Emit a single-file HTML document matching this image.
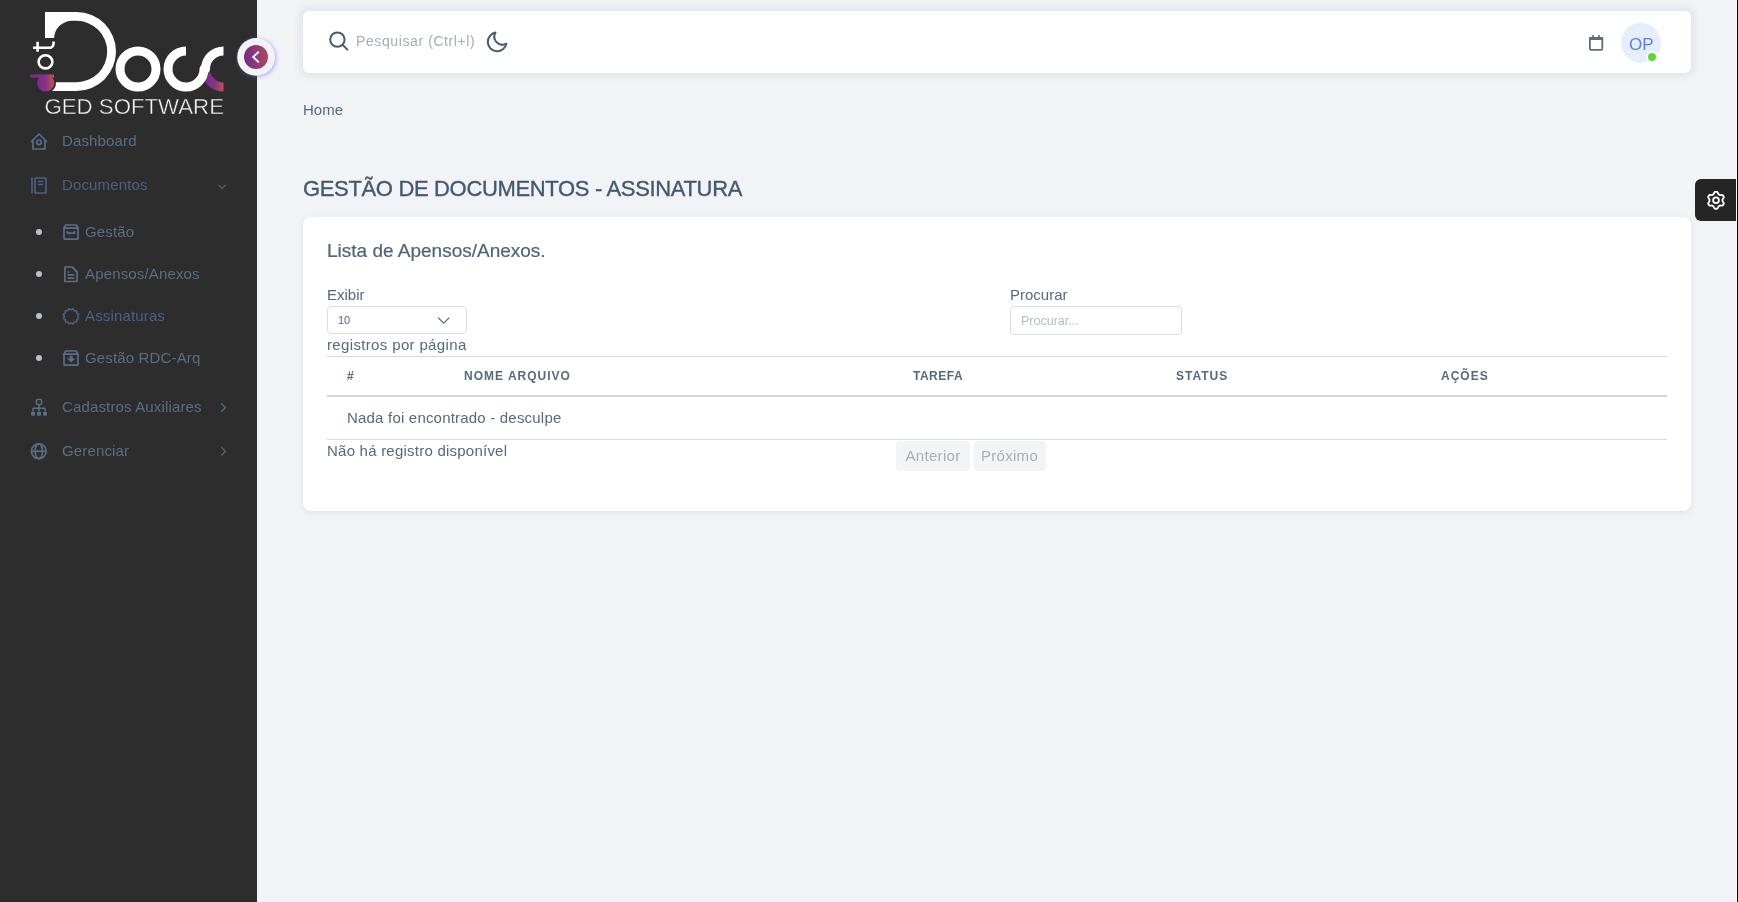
<!DOCTYPE html>
<html><head><meta charset="utf-8">
<style>
*{box-sizing:border-box;margin:0;padding:0}
html,body{width:1738px;height:902px;overflow:hidden}
body{background:#f2f3f7;font-family:"Liberation Sans",sans-serif;position:relative;color:#566a7f}
.a{position:absolute;white-space:nowrap;will-change:transform}
#sb{position:absolute;left:0;top:0;width:257px;height:902px;background:#2d2d2d}
.mi{position:absolute;font-size:15px;line-height:20px;color:#5f7189;letter-spacing:0.15px;will-change:transform}
.ic{position:absolute}
.mi{color:#5a6d86}.mi.dk{color:#4c6080}
.dot{position:absolute;width:6px;height:6px;border-radius:50%;background:#b9c2cc}
#nav{position:absolute;left:303px;top:11px;width:1388px;height:62px;background:#fff;border-radius:6px;box-shadow:0 0 6px 4px rgba(150,162,190,.16)}
#card{position:absolute;left:303px;top:217px;width:1388px;height:294px;background:#fff;border-radius:8px;box-shadow:0 2px 6px rgba(67,89,113,.10)}
.t15{font-size:15px;line-height:20px}
.th{top:369px;font-size:12px;line-height:14px;font-weight:bold;letter-spacing:1px;color:#566a7f}
.btn{top:441px;height:30px;background:#f3f4f6;border-radius:4px;font-size:15px;line-height:30px;color:#a5afba;text-align:center;letter-spacing:0.3px}

</style></head>
<body>
<div id="sb">
  <!-- logo -->
  <svg class="ic" style="left:0;top:0;will-change:transform" width="257" height="125" viewBox="0 0 257 125">
    <defs>
      <linearGradient id="g1" x1="0" x2="1" y1="0" y2="0">
        <stop offset="0" stop-color="#76288e"/><stop offset="0.55" stop-color="#8a3580"/><stop offset="1" stop-color="#c3525a"/>
      </linearGradient>
      <linearGradient id="g2" gradientUnits="userSpaceOnUse" x1="205" x2="224" y1="0" y2="0">
        <stop offset="0" stop-color="#76288e"/><stop offset="0.55" stop-color="#8a3580"/><stop offset="1" stop-color="#c3525a"/>
      </linearGradient>
    </defs>
    <!-- D -->
    <path fill="#fff" d="M45 12 H76.5 A39.5 39.5 0 0 1 76.5 91 H52.1 A10.3 10.3 0 0 0 55.9 82.2 H76.5 A30.7 30.7 0 0 0 76.5 20.8 H72 A18 18 0 0 0 54 38.8 V38 H45 Z"/>
    <!-- ot rotated -->
    <g fill="none" stroke="#fff" stroke-width="2.6">
      <ellipse cx="45.5" cy="61.85" rx="6.9" ry="6.55"/>
      <path d="M33.1 47.7 H49.6 A3.9 3.9 0 0 0 53.5 43.8 V41.6"/>
      <path d="M37.6 41.8 V51.7"/>
    </g>
    <!-- d gradient rotated -->
    <path fill="url(#g1)" d="M30 74.5 H54 V77.7 H30 Z"/>
    <circle cx="45.6" cy="83" r="8.6" fill="url(#g1)"/>
    <!-- o -->
    <circle cx="138" cy="69" r="18" fill="none" stroke="#fff" stroke-width="9"/>
    <!-- c2 bottom gradient -->
    <path d="M205.5 69 A18 18 0 0 0 223.5 87" fill="none" stroke="url(#g2)" stroke-width="9"/>
    <!-- c1 -->
    <path d="M186 51 A18 18 0 1 0 204 69 L205.5 69 A18 18 0 0 1 223.5 51" fill="none" stroke="#fff" stroke-width="9" stroke-linejoin="round"/>
    <!-- c2 top -->
    
    <text x="44.5" y="113.8" fill="#f4f4f4" stroke="#2d2d2d" stroke-width="0.4" font-family="Liberation Sans" font-size="21.3" textLength="179.5" lengthAdjust="spacingAndGlyphs">GED SOFTWARE</text>
  </svg>


  <svg class="ic" style="left:0;top:0" width="257" height="902" viewBox="0 0 257 902" fill="none" stroke="#5a6d86" stroke-width="1.7" stroke-linejoin="round" stroke-linecap="round">
    <!-- house -->
    <path d="M31.5 141.5 L39 134 L46.5 141.5"/>
    <path d="M33 140 V149 H45 V140"/>
    <circle cx="39" cy="142.3" r="2.3"/>
    <!-- book -->
    <path stroke="#4c6080" d="M32 177.5 V193.5" stroke-linecap="butt"/>
    <rect stroke="#4c6080" x="35" y="178" width="11" height="15" rx="0.5"/>
    <path stroke="#4c6080" d="M37.8 181.5 H43.2 M37.8 184.5 H43.2" stroke-linecap="butt"/>
    <!-- chevron down -->
    <path stroke="#4f5f73" d="M218.3 184.8 L222 188.5 L225.7 184.8" stroke-width="1.2"/>
    <!-- archive -->
    <path stroke="#5a6d86" d="M64 228.2 L65.6 225 H76.4 L78 228.2 V238.5 Q78 239.2 77.2 239.2 H64.8 Q64 239.2 64 238.5 Z"/>
    <path stroke="#5a6d86" d="M64 228.2 H78"/>
    <path stroke="#5a6d86" d="M67.5 231 V233.2 H74.5 V231" stroke-linecap="butt"/>
    <!-- file -->
    <path stroke="#5a6d86" d="M64.9 267 H72.3 L77 271.8 V281.5 H64.9 Z"/>
    <path stroke="#5a6d86" d="M72.3 267 L77 271.8"/>
    <rect x="67.6" y="271.3" width="1.6" height="1.6" fill="#5a6d86" stroke="none"/>
    <path stroke="#5a6d86" d="M67.6 274.8 H74.3 M67.6 278.2 H74.3" stroke-linecap="butt"/>
    <!-- badge -->
    <path stroke="#4c6080" stroke-width="1.6" d="M73.04 308.67 L74.30 310.58 L76.59 310.71 L76.72 313.00 L78.63 314.26 L77.60 316.30 L78.63 318.34 L76.72 319.60 L76.59 321.89 L74.30 322.02 L73.04 323.93 L71.00 322.90 L68.96 323.93 L67.70 322.02 L65.41 321.89 L65.28 319.60 L63.37 318.34 L64.40 316.30 L63.37 314.26 L65.28 313.00 L65.41 310.71 L67.70 310.58 L68.96 308.67 L71.00 309.70 Z"/>
    <!-- archive-in -->
    <path stroke="#5a6d86" d="M64 354.2 L65.6 351 H76.4 L78 354.2 V364.5 Q78 365.2 77.2 365.2 H64.8 Q64 365.2 64 364.5 Z"/>
    <path stroke="#5a6d86" d="M64 354.2 H78"/>
    <path d="M69.6 355.8 H72.6 V358.6 H75.4 L71.1 362.6 L66.8 358.6 H69.6 Z" fill="#5a6d86" stroke="none"/>
    <!-- sitemap -->
    <rect x="36.4" y="399.6" width="5.2" height="5" rx="1" stroke-width="1.5"/>
    <path d="M39 404.5 V408.3 M33 411.5 V408.3 H45 V411.5 M39 408.3 V411.5" stroke-width="1.5" stroke-linecap="butt"/>
    <rect x="31" y="411.8" width="4" height="4" rx="1" fill="#5a6d86" stroke="none"/>
    <rect x="37" y="411.8" width="4" height="4" rx="1" fill="#5a6d86" stroke="none"/>
    <rect x="43" y="411.8" width="4" height="4" rx="1" fill="#5a6d86" stroke="none"/>
    <!-- globe -->
    <circle cx="38.8" cy="451.3" r="7.4"/>
    <ellipse cx="38.8" cy="451.3" rx="3.7" ry="7.4"/>
    <path d="M31.4 451.3 H46.2" stroke-linecap="butt"/>
    <!-- chevrons right -->
    <path d="M221.6 403.6 L225.5 407.5 L221.6 411.4" stroke-width="1.2"/>
    <path d="M221.6 447.4 L225.5 451.3 L221.6 455.2" stroke-width="1.2"/>
  </svg>
  <div class="mi" style="left:62px;top:131px">Dashboard</div>
  <div class="mi dk" style="left:62px;top:175px">Documentos</div>
  <div class="mi" style="left:85.3px;top:222px">Gestão</div>
  <div class="mi" style="left:85.3px;top:264px">Apensos/Anexos</div>
  <div class="mi dk" style="left:85.3px;top:306px">Assinaturas</div>
  <div class="mi" style="left:85.3px;top:348px">Gestão RDC-Arq</div>
  <div class="mi" style="left:62px;top:397px">Cadastros Auxiliares</div>
  <div class="mi" style="left:62px;top:441px">Gerenciar</div>
  <div class="dot" style="left:36px;top:229px"></div>
  <div class="dot" style="left:36px;top:271px"></div>
  <div class="dot" style="left:36px;top:313px"></div>
  <div class="dot" style="left:36px;top:355px"></div>
</div>


<div id="nav"></div>
<svg class="ic" style="left:0;top:0;position:absolute;z-index:5" width="1738" height="902" viewBox="0 0 1738 902" fill="none" stroke-linecap="round" stroke-linejoin="round">
  <!-- collapse button -->
  <circle cx="256.1" cy="56.9" r="18.9" fill="#f2f3f7" stroke="none" style="filter:drop-shadow(1.2px 1.5px 2.2px rgba(105,108,255,.55))"/>
  <defs><linearGradient id="cg" x1="0" x2="1"><stop offset="0" stop-color="#722a8b"/><stop offset="1" stop-color="#ab4a5d"/></linearGradient></defs>
  <circle cx="256" cy="56.9" r="12" fill="url(#cg)" stroke="none"/>
  <path d="M258.8 51.6 L253.2 57 L258.8 62.4" stroke="#fff" stroke-width="1.9" stroke-linecap="butt" stroke-linejoin="miter"/>
  <!-- search -->
  <circle cx="337.4" cy="39.6" r="7.2" stroke="#4a5c72" stroke-width="2"/>
  <path d="M342.8 45 L347.4 49.6" stroke="#4a5c72" stroke-width="2"/>
  <!-- moon -->
  <path d="M495.5 32.6 A9.4 9.4 0 1 0 506.4 43.6 A8 8 0 0 1 495.5 32.6 Z" stroke="#4a5c72" stroke-width="2"/>
  <!-- calendar -->
  <rect x="1589.9" y="37.8" width="12.4" height="12.1" rx="1.2" stroke="#5b6b80" stroke-width="1.8"/>
  <rect x="1589" y="36.9" width="14.2" height="3.2" rx="1" fill="#5b6b80" stroke="none"/>
  <rect x="1592.2" y="35" width="1.6" height="2.5" fill="#5b6b80" stroke="none"/>
  <rect x="1598.1" y="35" width="1.6" height="2.5" fill="#5b6b80" stroke="none"/>
  <!-- avatar -->
  <circle cx="1641" cy="42.8" r="20" fill="#e5eefc" stroke="none"/>
  <circle cx="1652" cy="57" r="6" fill="#fff" stroke="none"/>
  <circle cx="1652" cy="57" r="4" fill="#62d630" stroke="none"/>
  <!-- select chevron -->
  <path d="M438.5 318 L443.7 323.2 L448.9 318" stroke="#566a7f" stroke-width="1.1"/>
</svg>
<div class="a" style="left:356px;top:30.5px;font-size:14px;line-height:20px;letter-spacing:0.6px;color:#a3adb9">Pesquisar (Ctrl+l)</div>
<div class="a" style="z-index:6;left:1629px;top:33.5px;font-size:17px;line-height:22px;color:#5a7fe6">OP</div>

<div class="a t15" style="left:303px;top:100px;color:#566a7f">Home</div>
<div class="a" style="left:303px;top:176px;font-size:22px;line-height:26px;letter-spacing:-0.34px;color:#435971;-webkit-text-stroke:0.35px #435971">GESTÃO DE DOCUMENTOS - ASSINATURA</div>
<div id="card"></div>
<div class="a" style="left:327px;top:240px;font-size:19px;line-height:22px;color:#4f6479;-webkit-text-stroke:0.2px #4f6479">Lista de Apensos/Anexos.</div>
<div class="a t15" style="left:327px;top:285px">Exibir</div>
<div class="a" style="left:327px;top:306px;width:140px;height:28px;border:1px solid #d9dee3;border-radius:4px"></div>
<div class="a" style="left:338px;top:313px;font-size:11px;line-height:14px;color:#566a7f">10</div>
<div class="a t15" style="left:327px;top:335px;letter-spacing:0.35px">registros por página</div>
<div class="a t15" style="left:1010px;top:285px">Procurar</div>
<div class="a" style="left:1010px;top:306px;width:172px;height:29px;border:1px solid #d9dee3;border-radius:4px"></div>
<div class="a" style="left:1021px;top:313px;font-size:12.5px;line-height:16px;color:#b4bdc6">Procurar...</div>
<div class="a" style="left:327px;top:356px;width:1340px;height:1px;background:#d6dbe1"></div>
<div class="a th" style="left:347px">#</div>
<div class="a th" style="left:464px">NOME ARQUIVO</div>
<div class="a th" style="left:913px;letter-spacing:0.5px">TAREFA</div>
<div class="a th" style="left:1176px">STATUS</div>
<div class="a th" style="left:1441px">AÇÕES</div>
<div class="a" style="left:327px;top:395px;width:1340px;height:2px;background:#d0d6dd"></div>
<div class="a t15" style="left:347px;top:408px;letter-spacing:0.2px">Nada foi encontrado - desculpe</div>
<div class="a" style="left:327px;top:439px;width:1340px;height:1px;background:#d6dbe1"></div>
<div class="a t15" style="left:327px;top:441px;letter-spacing:0.23px">Não há registro disponível</div>
<div class="a btn" style="left:896px;width:74px">Anterior</div>
<div class="a btn" style="left:973px;width:73px">Próximo</div>


<div class="a" style="left:1695px;top:179px;width:41px;height:42px;background:#252525;border-radius:6px 0 0 6px"></div>
<svg class="ic" style="left:1706px;top:190px;position:absolute" width="20" height="20" viewBox="0 0 20 20" fill="none" stroke="#fff" stroke-width="1.8" stroke-linejoin="round">
  <path d="M16.55 10.30 L16.55 10.47 L16.54 10.64 L16.53 10.81 L16.51 10.98 L16.49 11.15 L16.53 11.33 L16.70 11.54 L16.88 11.76 L17.06 12.00 L17.24 12.24 L17.42 12.50 L17.58 12.76 L17.72 13.03 L17.84 13.31 L17.81 13.53 L17.72 13.74 L17.63 13.94 L17.53 14.14 L17.43 14.33 L17.32 14.52 L17.20 14.72 L17.09 14.90 L16.96 15.09 L16.84 15.27 L16.70 15.44 L16.52 15.58 L16.23 15.62 L15.92 15.63 L15.61 15.63 L15.30 15.60 L15.00 15.57 L14.70 15.52 L14.42 15.48 L14.16 15.43 L13.99 15.50 L13.85 15.60 L13.71 15.70 L13.57 15.79 L13.42 15.88 L13.28 15.97 L13.13 16.06 L12.97 16.14 L12.82 16.21 L12.66 16.28 L12.51 16.35 L12.37 16.47 L12.27 16.72 L12.17 16.99 L12.06 17.26 L11.94 17.54 L11.81 17.82 L11.66 18.10 L11.49 18.35 L11.31 18.59 L11.10 18.68 L10.88 18.70 L10.66 18.72 L10.44 18.74 L10.22 18.75 L10.00 18.75 L9.78 18.75 L9.56 18.74 L9.34 18.72 L9.12 18.70 L8.90 18.68 L8.69 18.59 L8.51 18.35 L8.34 18.10 L8.19 17.82 L8.06 17.54 L7.94 17.26 L7.83 16.99 L7.73 16.72 L7.63 16.47 L7.49 16.35 L7.34 16.28 L7.18 16.21 L7.03 16.14 L6.87 16.06 L6.73 15.97 L6.58 15.88 L6.43 15.79 L6.29 15.70 L6.15 15.60 L6.01 15.50 L5.84 15.43 L5.58 15.48 L5.30 15.52 L5.00 15.57 L4.70 15.60 L4.39 15.63 L4.08 15.63 L3.77 15.62 L3.48 15.58 L3.30 15.44 L3.16 15.27 L3.04 15.09 L2.91 14.90 L2.80 14.72 L2.68 14.52 L2.57 14.33 L2.47 14.14 L2.37 13.94 L2.28 13.74 L2.19 13.53 L2.16 13.31 L2.28 13.03 L2.42 12.76 L2.58 12.50 L2.76 12.24 L2.94 12.00 L3.12 11.76 L3.30 11.54 L3.47 11.33 L3.51 11.15 L3.49 10.98 L3.47 10.81 L3.46 10.64 L3.45 10.47 L3.45 10.30 L3.45 10.13 L3.46 9.96 L3.47 9.79 L3.49 9.62 L3.51 9.45 L3.47 9.27 L3.30 9.06 L3.12 8.84 L2.94 8.60 L2.76 8.36 L2.58 8.10 L2.42 7.84 L2.28 7.57 L2.16 7.29 L2.19 7.07 L2.28 6.86 L2.37 6.66 L2.47 6.46 L2.57 6.27 L2.68 6.08 L2.80 5.88 L2.91 5.70 L3.04 5.51 L3.16 5.33 L3.30 5.16 L3.48 5.02 L3.77 4.98 L4.08 4.97 L4.39 4.97 L4.70 5.00 L5.00 5.03 L5.30 5.08 L5.58 5.12 L5.84 5.17 L6.01 5.10 L6.15 5.00 L6.29 4.90 L6.43 4.81 L6.58 4.72 L6.72 4.63 L6.87 4.54 L7.03 4.46 L7.18 4.39 L7.34 4.32 L7.49 4.25 L7.63 4.13 L7.73 3.88 L7.83 3.61 L7.94 3.34 L8.06 3.06 L8.19 2.78 L8.34 2.50 L8.51 2.25 L8.69 2.01 L8.90 1.92 L9.12 1.90 L9.34 1.88 L9.56 1.86 L9.78 1.85 L10.00 1.85 L10.22 1.85 L10.44 1.86 L10.66 1.88 L10.88 1.90 L11.10 1.92 L11.31 2.01 L11.49 2.25 L11.66 2.50 L11.81 2.78 L11.94 3.06 L12.06 3.34 L12.17 3.61 L12.27 3.88 L12.37 4.13 L12.51 4.25 L12.66 4.32 L12.82 4.39 L12.97 4.46 L13.13 4.54 L13.28 4.63 L13.42 4.72 L13.57 4.81 L13.71 4.90 L13.85 5.00 L13.99 5.10 L14.16 5.17 L14.42 5.12 L14.70 5.08 L15.00 5.03 L15.30 5.00 L15.61 4.97 L15.92 4.97 L16.23 4.98 L16.52 5.02 L16.70 5.16 L16.84 5.33 L16.96 5.51 L17.09 5.70 L17.20 5.88 L17.32 6.08 L17.43 6.27 L17.53 6.46 L17.63 6.66 L17.72 6.86 L17.81 7.07 L17.84 7.29 L17.72 7.57 L17.58 7.84 L17.42 8.10 L17.24 8.36 L17.06 8.60 L16.88 8.84 L16.70 9.06 L16.53 9.27 L16.49 9.45 L16.51 9.62 L16.53 9.79 L16.54 9.96 L16.55 10.13 Z"/>
  <circle cx="10" cy="10.3" r="2.9"/>
</svg>
<div class="a" style="left:1736px;top:0;width:1px;height:902px;background:#fff"></div>
<div class="a" style="left:1737px;top:0;width:1px;height:902px;background:#000"></div>
</body></html>
